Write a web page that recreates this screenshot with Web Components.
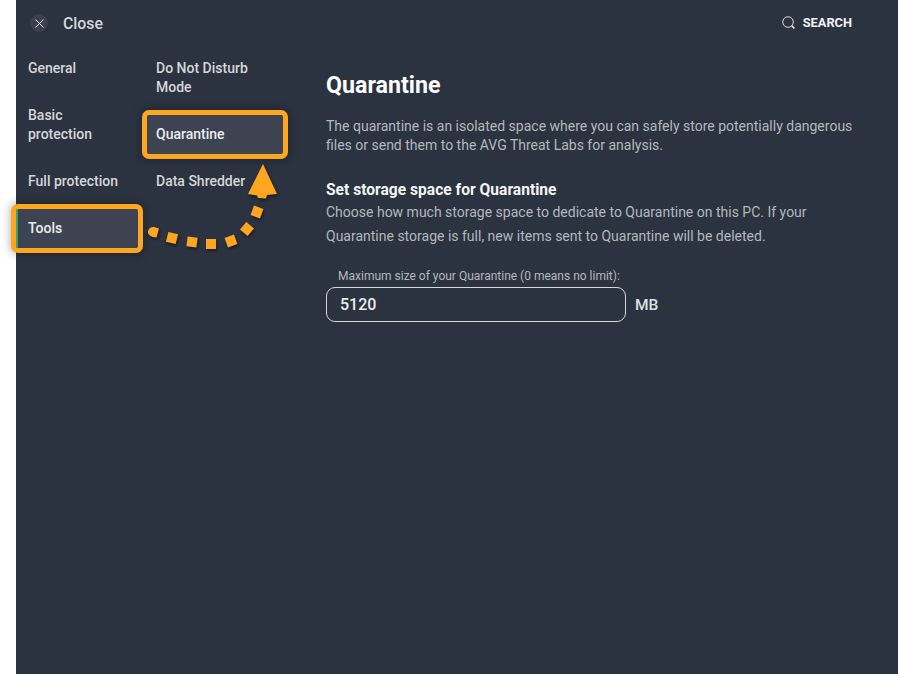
<!DOCTYPE html>
<html>
<head>
<meta charset="utf-8">
<title>Quarantine</title>
<style>
  html, body { margin: 0; background: #fff; }
  body { font-family: Roboto, "Liberation Sans", sans-serif; }
</style>
</head>
<body>
<settings-panel>
  <top-bar slot="top"></top-bar>
  <div slot="col1">
    <nav-item>General</nav-item>
    <nav-item>Basic<br>protection</nav-item>
    <nav-item>Full protection</nav-item>
    <nav-item active marked>Tools</nav-item>
  </div>
  <div slot="col2">
    <nav-item>Do Not Disturb<br>Mode</nav-item>
    <nav-item marked wide>Quarantine</nav-item>
    <nav-item>Data Shredder</nav-item>
  </div>
  <quarantine-page slot="main"></quarantine-page>
</settings-panel>

<script>
class SettingsPanel extends HTMLElement {
  connectedCallback() {
    this.attachShadow({ mode: 'open' });
    this.shadowRoot.innerHTML = `
      <style>
        :host {
          display: block;
          position: relative;
          height: 674px;
          margin-left: 16px;
          background: #2b3240;
          color: #e8e9eb;
        }
        .body { display: flex; padding-top: 3px; }
        .col { width: 128px; flex: none; }
        ::slotted([slot="col1"]), ::slotted([slot="col2"]) {
          display: flex;
          flex-direction: column;
          gap: 8px;
        }
        .main { margin-left: 54px; flex: 1; }
        svg {
          position: absolute; left: -16px; top: 0; overflow: visible;
          filter: drop-shadow(1px 2px 1.500px rgba(0, 0, 0, .45));
        }
      </style>
      <slot name="top"></slot>
      <div class="body">
        <div class="col"><slot name="col1"></slot></div>
        <div class="col"><slot name="col2"></slot></div>
        <div class="main"><slot name="main"></slot></div>
      </div>
      <svg width="300" height="260" viewBox="0 0 300 260" fill="#fda620">
        <path d="M148 231.500c.5-3 3-5 6-4.500l5 1.500-2.500 9-4-.5c-3-1-5-3-4.500-5.500z"/>
        <rect x="167" y="233" width="10" height="10" transform="rotate(14 172 238)"/>
        <rect x="187" y="237" width="10" height="10" transform="rotate(7 192 242)"/>
        <rect x="206" y="239" width="10" height="10"/>
        <rect x="226" y="236" width="10" height="10" transform="rotate(-20 231 241)"/>
        <rect x="242" y="224" width="10" height="10" transform="rotate(-50 247 229)"/>
        <rect x="252" y="207" width="10" height="10" transform="rotate(-70 257 212)"/>
        <path d="M263 164L248 194l9 1.500l1 2.500l8 .5l1-3.500l10-1z"/>
      </svg>
    `;
  }
}

class TopBar extends HTMLElement {
  connectedCallback() {
    this.attachShadow({ mode: 'open' });
    this.shadowRoot.innerHTML = `
      <style>
        :host {
          display: flex;
          align-items: center;
          justify-content: space-between;
          height: 46px;
          padding: 0 46px 0 14px;
        }
        .close { display: flex; align-items: center; gap: 15px; font-size: 15.800px; font-weight: 500; color: #d5d7da; }
        .x {
          width: 18px; height: 18px; border-radius: 50%;
          background: #3a404d;
          display: flex; align-items: center; justify-content: center;
        }
        .search { display: flex; align-items: center; gap: 8px; margin-bottom: 2px; font-size: 12.800px; font-weight: 700; color: #f2f3f4; }
      </style>
      <div class="close">
        <span class="x">
          <svg width="9" height="9" viewBox="0 0 9 9" fill="none" stroke="#eceded" stroke-width="1"><path d="M.5.5l8 8M8.500.5l-8 8"/></svg>
        </span>
        Close
      </div>
      <div class="search">
        <svg width="13" height="13" viewBox="0 0 14 14" fill="none" stroke="#e8e9eb" stroke-width="1">
          <circle cx="6.500" cy="6.500" r="5.700"/><path d="M10.500 10.500l2.800 2.800" stroke-width="1.800"/>
        </svg>
        SEARCH
      </div>
    `;
  }
}

class NavItem extends HTMLElement {
  connectedCallback() {
    this.attachShadow({ mode: 'open' });
    this.shadowRoot.innerHTML = `
      <style>
        :host {
          display: block;
          box-sizing: border-box;
          padding: 10px 12px;
          font-size: 14px;
          font-weight: 500;
          line-height: 19px;
          color: #d5d7da;
        }
        :host([marked]) {
          background: #3d4350;
          border-radius: 2px;
          outline: 5px solid #fda620;
          box-shadow: 0 0 9px 6px rgba(0, 0, 0, .28);
          color: #eceded;
        }
        :host([active]) {
          margin-right: 6px;
          border-left: 2px solid #37a56d;
          padding-left: 10px;
        }
        :host([wide]) {
          margin: 0 -11px 0 3px;
          padding-left: 9px;
        }
      </style>
      <slot></slot>
    `;
  }
}

class QuarantinePage extends HTMLElement {
  connectedCallback() {
    this.attachShadow({ mode: 'open' });
    this.shadowRoot.innerHTML = `
      <style>
        :host { display: block; padding-top: 21px; font-size: 14px; color: #b5b8be; }
        h1 { margin: 0 0 17px; font-size: 23.200px; line-height: 30px; font-weight: 700; color: #fff; }
        p { margin: 0; line-height: 19px; width: 540px; }
        h2 { margin: 25px 0 0; font-size: 15.600px; line-height: 20px; font-weight: 700; color: #f4f5f6; }
        .lines { line-height: 24px; }
        label { display: block; margin: 21px 0 0 12px; font-size: 12px; line-height: 14px; color: #b5b8be; }
        .row { display: flex; align-items: center; gap: 9px; margin-top: 4px; }
        .input {
          box-sizing: border-box;
          width: 300px; height: 35px;
          padding: 0 13px;
          display: flex; align-items: center;
          border: 1px solid #d5d7da;
          border-radius: 9px;
          font-size: 16px; font-weight: 500; color: #eceded;
        }
        .unit { font-size: 15.500px; font-weight: 500; color: #dfe1e4; }
      </style>
      <h1>Quarantine</h1>
      <p>The quarantine is an isolated space where you can safely store potentially dangerous<br>files or send them to the AVG Threat Labs for analysis.</p>
      <h2>Set storage space for Quarantine</h2>
      <p class="lines">Choose how much storage space to dedicate to Quarantine on this PC. If your<br>Quarantine storage is full, new items sent to Quarantine will be deleted.</p>
      <label>Maximum size of your Quarantine (0 means no limit):</label>
      <div class="row">
        <div class="input">5120</div>
        <span class="unit">MB</span>
      </div>
    `;
  }
}

customElements.define('settings-panel', SettingsPanel);
customElements.define('top-bar', TopBar);
customElements.define('nav-item', NavItem);
customElements.define('quarantine-page', QuarantinePage);
</script>
</body>
</html>
